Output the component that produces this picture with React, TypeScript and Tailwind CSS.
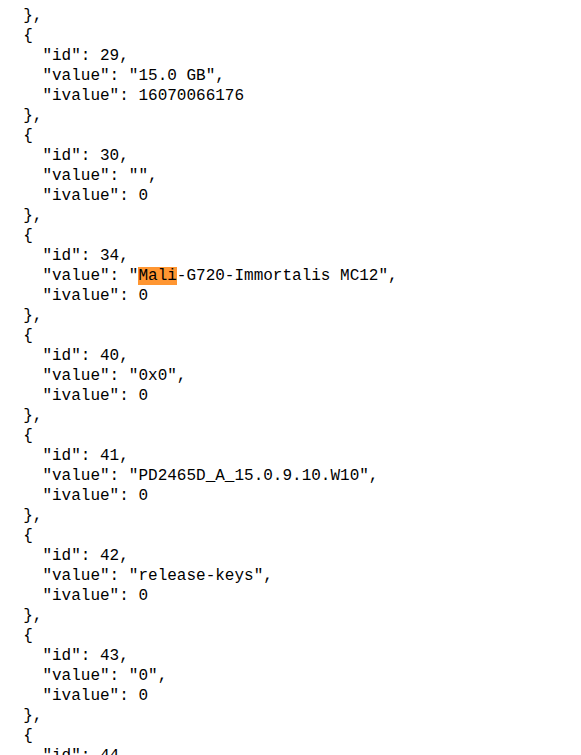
const entries = [
  { id: 29, value: '"15.0 GB"', ivalue: "16070066176" },
  { id: 30, value: '""', ivalue: "0" },
  { id: 34, value: "MALI", ivalue: "0" },
  { id: 40, value: '"0x0"', ivalue: "0" },
  { id: 41, value: '"PD2465D_A_15.0.9.10.W10"', ivalue: "0" },
  { id: 42, value: '"release-keys"', ivalue: "0" },
  { id: 43, value: '"0"', ivalue: "0" },
]

function Line({ children }: { children: React.ReactNode }) {
  return <div className="h-5 whitespace-pre">{children}</div>
}

export default function App() {
  return (
    <div className="min-h-screen overflow-hidden bg-white">
      <div
        className="-mt-[14px] pl-[4px] text-[16px] leading-5 text-black"
        style={{ fontFamily: '"Liberation Mono", "DejaVu Sans Mono", monospace' }}
      >
        <Line>{'    "ivalue": 0'}</Line>
        <Line>{"  },"}</Line>
        {entries.map((e) => (
          <div key={e.id}>
            <Line>{"  {"}</Line>
            <Line>{`    "id": ${e.id},`}</Line>
            {e.value === "MALI" ? (
              <Line>
                {'    "value": "'}
                <span className="bg-[#ff9632]">Mali</span>
                {'-G720-Immortalis MC12",'}
              </Line>
            ) : (
              <Line>{`    "value": ${e.value},`}</Line>
            )}
            <Line>{`    "ivalue": ${e.ivalue}`}</Line>
            <Line>{"  },"}</Line>
          </div>
        ))}
        <Line>{"  {"}</Line>
        <Line>{'    "id": 44,'}</Line>
      </div>
    </div>
  )
}
